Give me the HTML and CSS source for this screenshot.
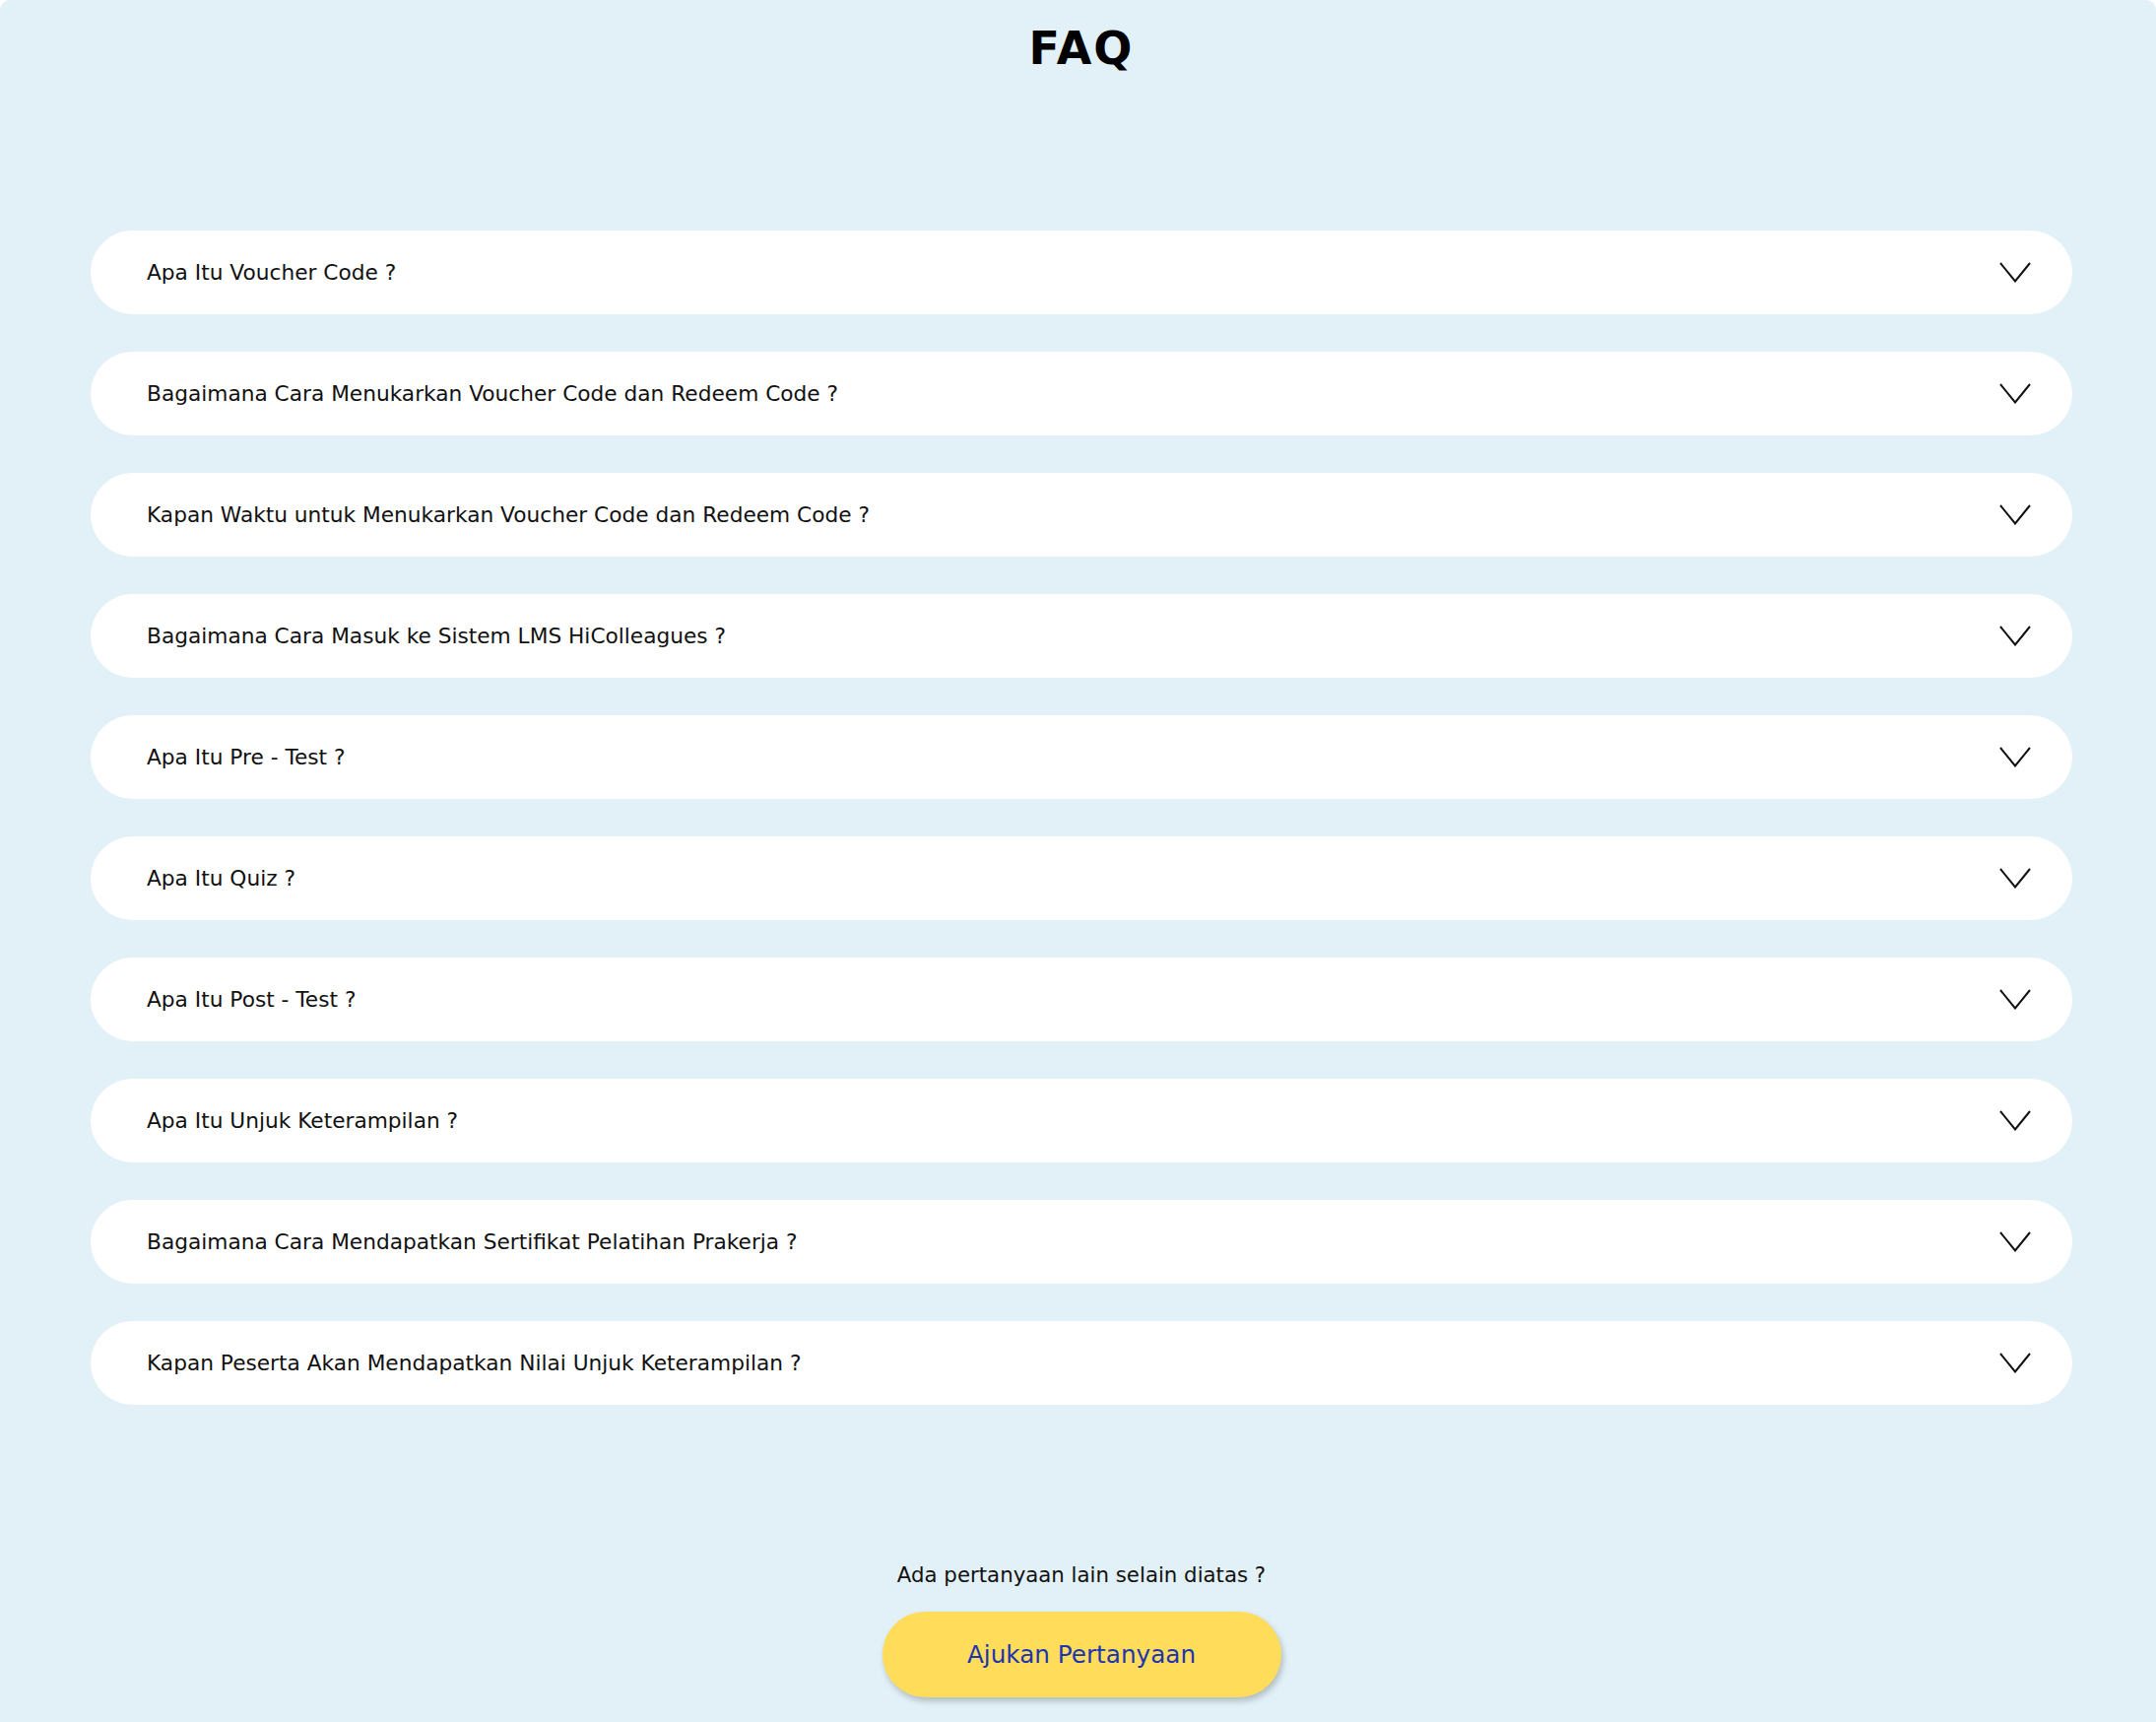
FILE: index.html
```html
<!DOCTYPE html>
<html lang="id">
<head>
<meta charset="utf-8">
<title>FAQ</title>
<link rel="stylesheet" href="styles.css">
</head>
<body>
<main class="page">
  <h1 class="title">FAQ</h1>
  <ul class="faq-list">
    <li class="faq-item"><span class="faq-q">Apa Itu Voucher Code ?</span><svg class="chev" viewBox="0 0 32 21" width="32" height="21"><polyline points="1,1 16,19.5 31,1"/></svg></li>
    <li class="faq-item"><span class="faq-q">Bagaimana Cara Menukarkan Voucher Code dan Redeem Code ?</span><svg class="chev" viewBox="0 0 32 21" width="32" height="21"><polyline points="1,1 16,19.5 31,1"/></svg></li>
    <li class="faq-item"><span class="faq-q">Kapan Waktu untuk Menukarkan Voucher Code dan Redeem Code ?</span><svg class="chev" viewBox="0 0 32 21" width="32" height="21"><polyline points="1,1 16,19.5 31,1"/></svg></li>
    <li class="faq-item"><span class="faq-q">Bagaimana Cara Masuk ke Sistem LMS HiColleagues ?</span><svg class="chev" viewBox="0 0 32 21" width="32" height="21"><polyline points="1,1 16,19.5 31,1"/></svg></li>
    <li class="faq-item"><span class="faq-q">Apa Itu Pre - Test ?</span><svg class="chev" viewBox="0 0 32 21" width="32" height="21"><polyline points="1,1 16,19.5 31,1"/></svg></li>
    <li class="faq-item"><span class="faq-q">Apa Itu Quiz ?</span><svg class="chev" viewBox="0 0 32 21" width="32" height="21"><polyline points="1,1 16,19.5 31,1"/></svg></li>
    <li class="faq-item"><span class="faq-q">Apa Itu Post - Test ?</span><svg class="chev" viewBox="0 0 32 21" width="32" height="21"><polyline points="1,1 16,19.5 31,1"/></svg></li>
    <li class="faq-item"><span class="faq-q">Apa Itu Unjuk Keterampilan ?</span><svg class="chev" viewBox="0 0 32 21" width="32" height="21"><polyline points="1,1 16,19.5 31,1"/></svg></li>
    <li class="faq-item"><span class="faq-q">Bagaimana Cara Mendapatkan Sertifikat Pelatihan Prakerja ?</span><svg class="chev" viewBox="0 0 32 21" width="32" height="21"><polyline points="1,1 16,19.5 31,1"/></svg></li>
    <li class="faq-item"><span class="faq-q">Kapan Peserta Akan Mendapatkan Nilai Unjuk Keterampilan ?</span><svg class="chev" viewBox="0 0 32 21" width="32" height="21"><polyline points="1,1 16,19.5 31,1"/></svg></li>
  </ul>
  <section class="ask">
    <p class="ask-text">Ada pertanyaan lain selain diatas ?</p>
    <button class="ask-btn">Ajukan Pertanyaan</button>
  </section>
</main>
</body>
</html>
```
FILE: styles.css
```css
html, body {
  margin: 0;
  padding: 0;
  background: #ffffff;
}
.page {
  box-sizing: border-box;
  width: 2189px;
  height: 1748px;
  background: #e2f1f8;
  border-radius: 10px 10px 0 0;
  font-family: "DejaVu Sans", "Open Sans", sans-serif;
  color: #111;
  display: flex;
  flex-direction: column;
  align-items: center;
  padding: 22px 85px 0 92px;
}
.title {
  margin: 0;
  font-size: 46px;
  line-height: 55px;
  font-weight: 700;
  letter-spacing: 2px;
  color: #000;
}
.faq-list {
  list-style: none;
  margin: 157px 0 0;
  padding: 0;
  width: 100%;
  display: flex;
  flex-direction: column;
  gap: 38px;
}
.faq-item {
  box-sizing: border-box;
  height: 85px;
  background: #fff;
  border-radius: 43px;
  display: flex;
  align-items: center;
  justify-content: space-between;
  padding: 0 42px 0 57px;
}
.faq-q {
  font-size: 21.7px;
  color: #111;
}
.chev {
  display: block;
}
.chev polyline {
  fill: none;
  stroke: #111;
  stroke-width: 2;
}
.ask {
  margin-top: 159px;
  display: flex;
  flex-direction: column;
  align-items: center;
}
.ask-text {
  margin: 0;
  font-size: 21.3px;
  line-height: 28px;
  color: #111;
}
.ask-btn {
  margin-top: 23px;
  width: 405px;
  height: 87px;
  border: none;
  border-radius: 44px;
  background: #ffdd5a;
  color: #1e35b0;
  font-family: inherit;
  font-size: 24.7px;
  box-shadow: 2px 4px 6px rgba(0, 0, 0, 0.22);
}
```
